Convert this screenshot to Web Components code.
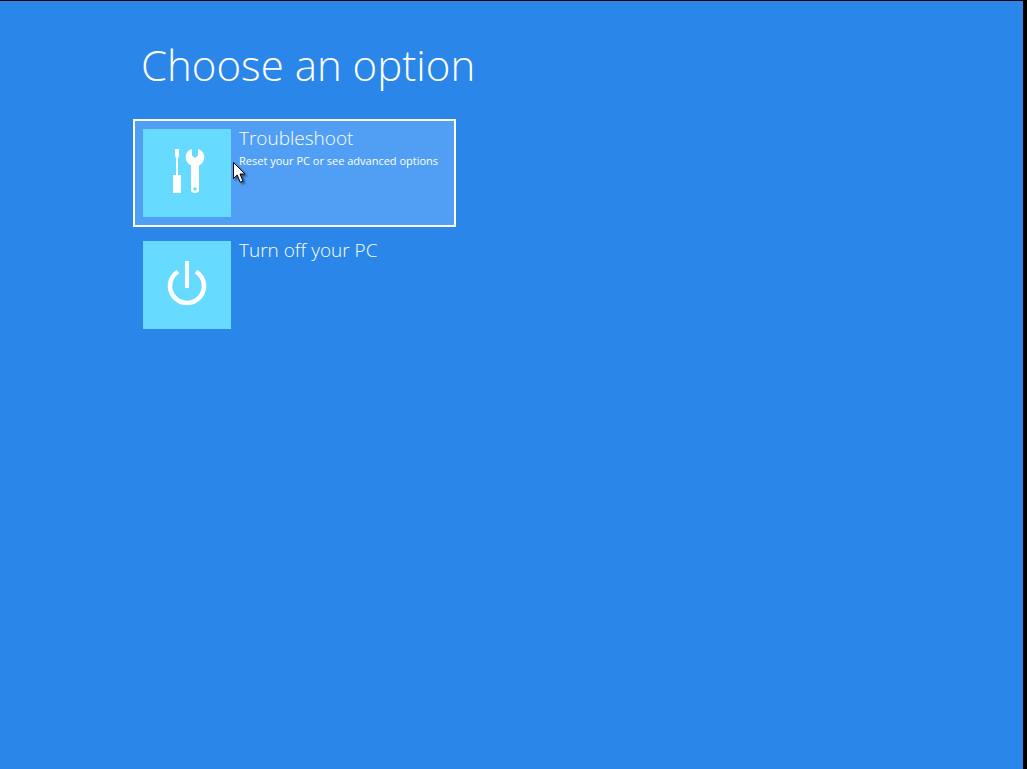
<!DOCTYPE html>
<html lang="en">
<head>
<meta charset="utf-8">
<meta name="viewport" content="width=device-width, initial-scale=1">
<title>Choose an option</title>
<style>
  html, body { margin: 0; height: 100%; background: #000; }
  body { font-family: "Open Sans", "Noto Sans", sans-serif; color: #fff; }
</style>
</head>
<body>
<recovery-screen heading="Choose an option">
  <option-tile label="Troubleshoot" selected>
    <tools-icon slot="icon"></tools-icon>
    Reset your PC or see advanced options
    <mouse-pointer slot="pointer"></mouse-pointer>
  </option-tile>
  <option-tile label="Turn off your PC">
    <power-icon slot="icon"></power-icon>
  </option-tile>
</recovery-screen>

<script>
class RecoveryScreen extends HTMLElement {
  connectedCallback() {
    const root = this.attachShadow({ mode: "open" });
    root.innerHTML = `
      <style>
        :host { display: block; box-sizing: border-box; min-height: 100%; background: #2a86e9;
                border: 0 solid #000; border-width: 1px 4px 0 0; padding: 32px 24px 32px 133px; }
        h1 { margin: 0 0 22px 8px; font-size: 42px; line-height: 64px; font-weight: 300; }
        nav { display: grid; grid-template-columns: minmax(0, 323px); gap: 4px; }
      </style>
      <main><h1></h1><nav><slot></slot></nav></main>`;
    root.querySelector("h1").textContent = this.getAttribute("heading");
  }
}

class OptionTile extends HTMLElement {
  connectedCallback() {
    const root = this.attachShadow({ mode: "open" });
    root.innerHTML = `
      <style>
        :host { display: block; position: relative; }
        button { display: flex; gap: 8px; width: 100%; padding: 8px; border: 2px solid transparent;
                 background: none; color: inherit; font: inherit; text-align: left; outline: none; }
        :host([selected]) button { background: #519ff5; border-color: #fff; }
        button:focus-visible { border-color: #fff; }
        .icon { flex: none; width: 88px; height: 88px; background: #66dbff; }
        .text { display: grid; align-content: start; white-space: nowrap; }
        .label { font-size: 19px; line-height: 18px; font-weight: 300; }
        .detail { font-size: 11px; line-height: 28px; }
      </style>
      <button type="button">
        <span class="icon"><slot name="icon"></slot></span>
        <span class="text"><span class="label"></span><span class="detail"><slot></slot></span></span>
      </button>
      <slot name="pointer"></slot>`;
    root.querySelector(".label").textContent = this.getAttribute("label");
  }
}

class ToolsIcon extends HTMLElement {
  connectedCallback() {
    this.attachShadow({ mode: "open" }).innerHTML = `
      <style>:host, svg { display: block; }</style>
      <svg width="88" height="88" viewBox="0 0 88 88" fill="#fff" aria-hidden="true">
        <path d="M32 20h4v7l-1 2v17h3v18h-8V46h3V29l-1-2z"/>
        <path fill-rule="evenodd" d="M49 20v6.500l3 2.500 3-2.500V20c3.800 1.300 6.300 4.300 6.300 8 0 3.800-2 6.800-5.300 8.500V61c0 2-1.500 3-4 3s-4-1-4-3V36.500c-3.300-1.700-5.300-4.700-5.300-8.500 0-3.700 2.500-6.700 6.300-8zM52 58.300a1.700 1.700 0 1 0 0 3.400 1.700 1.700 0 0 0 0-3.400z"/>
      </svg>`;
  }
}

class PowerIcon extends HTMLElement {
  connectedCallback() {
    this.attachShadow({ mode: "open" }).innerHTML = `
      <style>:host, svg { display: block; }</style>
      <svg width="88" height="88" viewBox="0 0 88 88" fill="none" stroke="#fff" aria-hidden="true">
        <path stroke-width="4" d="M44 20v27"/>
        <path stroke-width="4.600" d="M35 30.600a17 17 0 1 0 18 0"/>
      </svg>`;
  }
}

class MousePointer extends HTMLElement {
  connectedCallback() {
    this.attachShadow({ mode: "open" }).innerHTML = `
      <style>
        :host { position: absolute; left: 100px; top: 43px; pointer-events: none; }
        svg { display: block; filter: drop-shadow(2px 2px 1px rgba(0, 0, 0, .45)); }
      </style>
      <svg width="14" height="22" viewBox="0 0 14 22" aria-hidden="true">
        <path d="M.5.500v16l3.700-3.500 3 7.200 2.800-1.200-3-7h5z" fill="#fff" stroke="#000"/>
      </svg>`;
  }
}

customElements.define("recovery-screen", RecoveryScreen);
customElements.define("option-tile", OptionTile);
customElements.define("tools-icon", ToolsIcon);
customElements.define("power-icon", PowerIcon);
customElements.define("mouse-pointer", MousePointer);
</script>
</body>
</html>
